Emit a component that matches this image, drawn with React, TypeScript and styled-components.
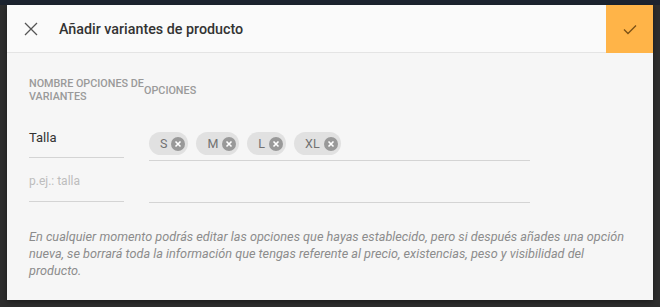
import React from 'react';
import styled, { createGlobalStyle } from 'styled-components';

const GlobalStyle = createGlobalStyle`
    html, body {
        margin: 0;
        padding: 0;
        background: #2e2e2e;
        font-family: Roboto, "Liberation Sans", Arial, sans-serif;
    }
`;

const Page = styled.div`
    width: 660px;
    height: 307px;
    overflow: hidden;
    background: #2e2e2e;
`;

const TopBand = styled.div`
    height: 5px;
    background: #1d2430;
`;

const Dialog = styled.div`
    margin: 0 7px;
    width: 646px;
    height: 295px;
    background: #f6f6f6;
    box-shadow: 0 2px 6px rgba(0, 0, 0, 0.4);
    display: flex;
    flex-direction: column;
`;

const Header = styled.div`
    height: 47px;
    display: flex;
    align-items: center;
    background: #fafafa;
    border-bottom: 1px solid #e4e4e4;
`;

const CloseButton = styled.button`
    width: 50px;
    height: 47px;
    padding: 0 0 0 17px;
    border: none;
    background: none;
    display: flex;
    align-items: center;
    color: #555;
`;

const Title = styled.h1`
    flex: 1;
    margin: 0 0 0 2px;
    font-size: 14.3px;
    font-weight: 500;
    color: #333;
`;

const ConfirmButton = styled.button`
    width: 47px;
    height: 48px;
    margin-bottom: -1px;
    border: none;
    background: #ffb448;
    display: flex;
    align-items: center;
    justify-content: center;
    color: #7d5216;
`;

const Body = styled.div`
    padding: 24px 22px 0 22px;
`;

const Grid = styled.div<{ $gap?: number }>`
    display: grid;
    grid-template-columns: 115px 1fr;
    align-items: start;
    margin-top: ${p => p.$gap ?? 0}px;
`;

const HeadLabel = styled.div`
    align-self: center;
    font-size: 10.8px;
    line-height: 13px;
    font-weight: 500;
    text-transform: uppercase;
    color: #9a9a9a;
`;

const NameField = styled.div<{ $placeholder?: boolean }>`
    box-sizing: border-box;
    width: 95px;
    height: 41px;
    display: flex;
    align-items: center;
    border-bottom: 1px solid #d4d4d4;
    font-size: ${p => (p.$placeholder ? '12px' : '13px')};
    color: ${p => (p.$placeholder ? '#bdbdbd' : '#333')};
`;

const OptionsField = styled.div<{ $tall?: boolean }>`
    box-sizing: border-box;
    margin-left: 5px;
    width: 381px;
    height: ${p => (p.$tall ? '44px' : '42px')};
    display: flex;
    align-items: flex-end;
    gap: 8px;
    padding-bottom: 5px;
    border-bottom: 1px solid #d4d4d4;
`;

const Chip = styled.span`
    height: 23px;
    display: inline-flex;
    align-items: center;
    gap: 4px;
    padding: 0 3px 0 11px;
    border-radius: 12px;
    background: #e1e1e1;
    font-size: 12.5px;
    color: #727272;
`;

const ChipRemove = styled.span`
    width: 14px;
    height: 14px;
    border-radius: 50%;
    background: #999;
    display: flex;
    align-items: center;
    justify-content: center;
`;

const Note = styled.p`
    margin: 25px 0 0 0;
    font-size: 12.7px;
    line-height: 17px;
    font-style: italic;
    color: #8c8c8c;
`;

const options = ['S', 'M', 'L', 'XL'];

const App: React.FC = () => {
    return (
        <Page>
            <GlobalStyle />
            <TopBand />
            <Dialog>
                <Header>
                    <CloseButton>
                        <svg width="14" height="14" viewBox="0 0 14 14">
                            <path d="M1 1 L13 13 M13 1 L1 13" stroke="currentColor" strokeWidth="1.3" fill="none" />
                        </svg>
                    </CloseButton>
                    <Title>Añadir variantes de producto</Title>
                    <ConfirmButton>
                        <svg width="14" height="11" viewBox="0 0 14 11">
                            <path d="M1 5.5 L5 9.5 L13 1.5" stroke="currentColor" strokeWidth="1.4" fill="none" />
                        </svg>
                    </ConfirmButton>
                </Header>
                <Body>
                    <Grid>
                        <HeadLabel>Nombre opciones de variantes</HeadLabel>
                        <HeadLabel>Opciones</HeadLabel>
                    </Grid>
                    <Grid $gap={14}>
                        <NameField>Talla</NameField>
                        <OptionsField $tall>
                            {options.map(o => (
                                <Chip key={o}>
                                    {o}
                                    <ChipRemove>
                                        <svg width="8" height="8" viewBox="0 0 8 8">
                                            <path d="M1.5 1.5 L6.5 6.5 M6.5 1.5 L1.5 6.5" stroke="#fff" strokeWidth="1.6" />
                                        </svg>
                                    </ChipRemove>
                                </Chip>
                            ))}
                        </OptionsField>
                        <NameField $placeholder>p.ej.: talla</NameField>
                        <OptionsField />
                    </Grid>
                    <Note>
                        En cualquier momento podrás editar las opciones que hayas establecido, pero si después añades una opción
                        nueva, se borrará toda la información que tengas referente al precio, existencias, peso y visibilidad del
                        producto.
                    </Note>
                </Body>
            </Dialog>
        </Page>
    );
};

export default App;
